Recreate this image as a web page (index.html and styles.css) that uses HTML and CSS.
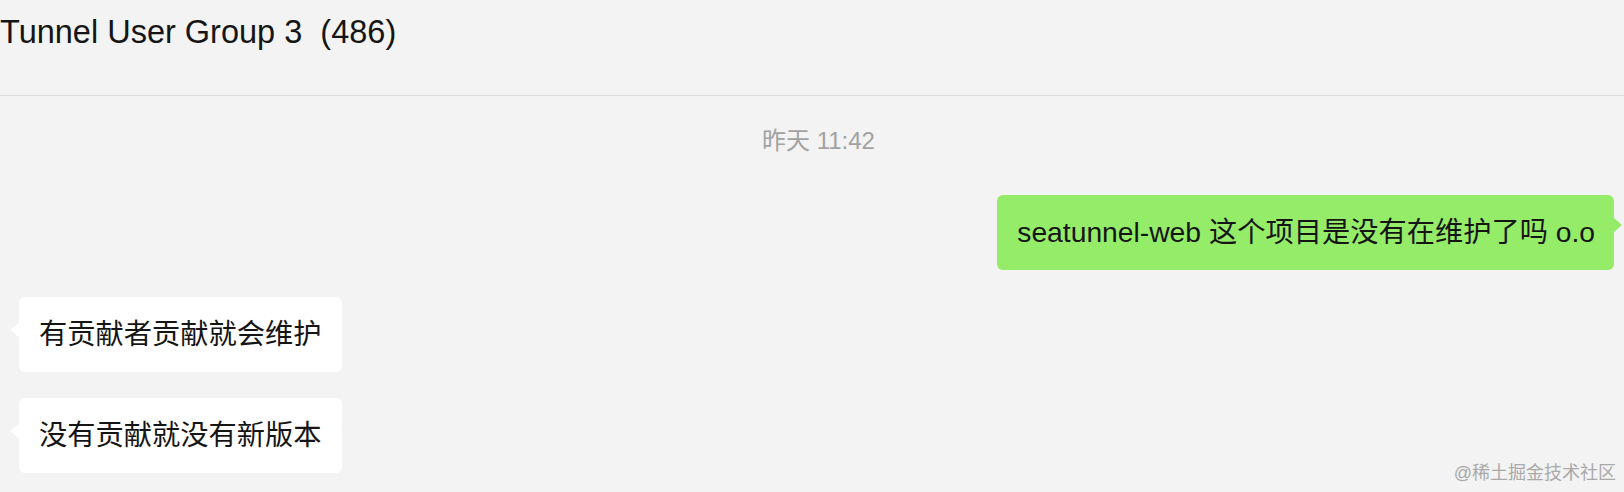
FILE: index.html
```html
<!DOCTYPE html>
<html lang="zh-CN">
<head>
<meta charset="UTF-8">
<meta name="viewport" content="width=device-width, initial-scale=1.0">
<title>Tunnel User Group 3</title>
<link rel="stylesheet" href="styles.css">
</head>
<body>

<div class="chat">
    <div class="chat-header">
        <h2 class="chat-title">Tunnel User Group 3&nbsp;&nbsp;(486)</h2>
    </div>

    <div class="messages">
        <div class="time">昨天 11:42</div>

        <div class="row row-mine">
            <div class="bubble bubble-mine">seatunnel-web 这个项目是没有在维护了吗 o.o</div>
        </div>

        <div class="row row-other">
            <div class="bubble bubble-other">有贡献者贡献就会维护</div>
        </div>

        <div class="row row-other">
            <div class="bubble bubble-other">没有贡献就没有新版本</div>
        </div>
    </div>

    <div class="watermark">@稀土掘金技术社区</div>
</div>

</body>
</html>
```

FILE: styles.css
```css
body {
    font-family: "Liberation Sans", "Noto Sans CJK SC", sans-serif;
    background-color: #f3f3f3;
    color: #151515;
    margin: 0;
    padding: 0;
}
.chat {
    position: relative;
    height: 492px;
    overflow: hidden;
}
.chat-header {
    height: 83px;
    padding-top: 12px;
    border-bottom: 1px solid #dcdcdc;
}
.chat-title {
    margin: 0;
    font-size: 32.5px;
    font-weight: normal;
    line-height: 40px;
    color: #151515;
}
.messages {
    display: flex;
    flex-direction: column;
}
.time {
    margin-top: 30px;
    padding-left: 13px;
    text-align: center;
    font-size: 24px;
    line-height: 30px;
    color: #a2a2a2;
}
.row {
    display: flex;
}
.row-mine {
    justify-content: flex-end;
    padding-right: 10px;
    margin-top: 39px;
}
.row-other {
    justify-content: flex-start;
    padding-left: 19px;
    margin-top: 27px;
}
.row-other + .row-other {
    margin-top: 26px;
}
.bubble {
    position: relative;
    font-size: 28.25px;
    line-height: 39px;
    padding: 18px 20px;
    border-radius: 6px;
    white-space: nowrap;
}
.bubble-mine {
    background-color: #95ec69;
    padding-right: 19px;
}
.bubble-other {
    background-color: #ffffff;
    padding-right: 20px;
}
/* little speech tails */
.bubble-mine::after {
    content: "";
    position: absolute;
    top: 23px;
    right: -8px;
    border-top: 7px solid transparent;
    border-bottom: 7px solid transparent;
    border-left: 8px solid #95ec69;
}
.bubble-other::before {
    content: "";
    position: absolute;
    top: 26px;
    left: -9px;
    border-top: 7px solid transparent;
    border-bottom: 7px solid transparent;
    border-right: 9px solid #ffffff;
}
.watermark {
    position: absolute;
    right: 8px;
    bottom: 8px;
    font-size: 18px;
    color: #a9a9a9;
}
```
